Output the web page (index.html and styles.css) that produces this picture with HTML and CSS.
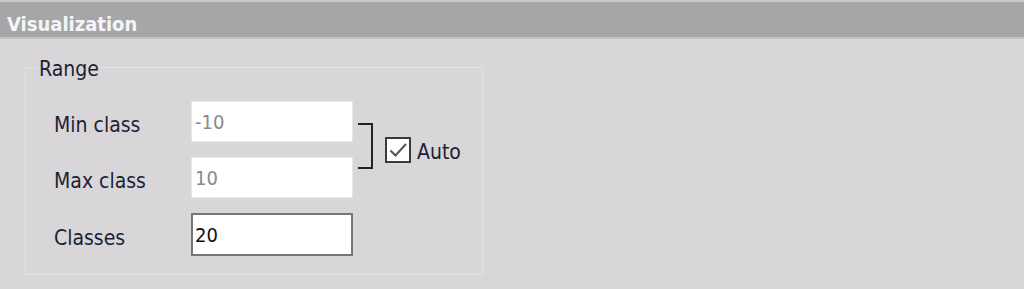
FILE: index.html
```html
<!DOCTYPE html>
<html>
<head>
<meta charset="utf-8">
<link rel="stylesheet" href="styles.css">
</head>
<body>
<div class="topstrip"></div>
<div class="header">Visualization</div>
<fieldset class="group">
  <legend class="legend">Range</legend>
  <div class="grid">
    <label class="lbl">Min class</label>
    <div class="field disabled">-10</div>
    <div class="side">
      <div class="bracket"></div>
      <svg class="check" width="26" height="26" viewBox="0 0 26 26">
        <rect x="1" y="1" width="24" height="24" fill="#fff" stroke="#3a3a3a" stroke-width="2"/>
        <path d="M5.5 13.5 L10.5 18.5 L21 7" fill="none" stroke="#555" stroke-width="2"/>
      </svg>
      <span class="auto">Auto</span>
    </div>
    <label class="lbl">Max class</label>
    <div class="field disabled">10</div>
    <label class="lbl">Classes</label>
    <div class="field active">20</div>
  </div>
</fieldset>
</body>
</html>
```
FILE: styles.css
```css
html, body {
  margin: 0;
  padding: 0;
}
body {
  background: #d8d6d9;
  width: 1024px;
  height: 289px;
  overflow: hidden;
  font-family: "DejaVu Sans Condensed", "DejaVu Sans", sans-serif;
  font-size: 21px;
  color: #1d1f33;
}
.topstrip {
  height: 2px;
  background: #c7c7c7;
}
.header {
  height: 37px;
  box-sizing: border-box;
  background: #a6a6a6;
  border-bottom: 2px solid #c3c3c3;
  color: #f2f5f9;
  font-weight: bold;
  font-size: 20px;
  line-height: 24px;
  padding: 10px 0 0 7px;
}
.group {
  margin: 14px 0 0 25px;
  width: 458px;
  box-sizing: border-box;
  border: 1px solid #e3e1e4;
  padding: 20px 0 18px 0;
  min-width: 0;
}
.legend {
  margin-left: 11px;
  padding: 4px 2px 0;
  line-height: 24px;
  font-size: 21px;
}
.grid {
  display: grid;
  margin-left: 28px;
  grid-template-columns: 137px 162px auto;
  grid-template-rows: 41px 41px 43px;
  row-gap: 15px;
  align-items: center;
}
.lbl {
  line-height: 24px;
  padding-top: 6px;
}
.field {
  height: 100%;
  box-sizing: border-box;
  background: #fff;
  padding-left: 3px;
  display: flex;
  align-items: center;
  font-size: 20px;
}
.field.disabled {
  border: 1px solid #e6e6e6;
  color: #8a8a8a;
}
.field.active {
  border: 2px solid #767676;
  padding-left: 2px;
  color: #111;
}
.side {
  grid-column: 3;
  grid-row: 1 / 3;
  display: flex;
  align-items: center;
  height: 100%;
}
.bracket {
  width: 13px;
  height: 42px;
  margin-left: 5px;
  margin-bottom: 7px;
  border: 2px solid #222;
  border-left: none;
}
.check {
  margin-left: 12px;
  display: block;
}
.auto {
  margin-left: 6px;
  padding-top: 4px;
}
```
